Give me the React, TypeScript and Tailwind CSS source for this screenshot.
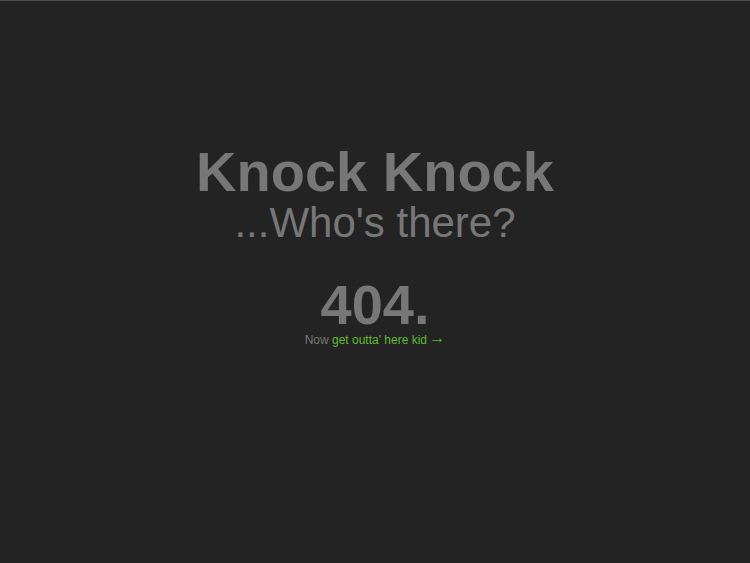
export default function App() {
  return (
    <div className="min-h-[563px] w-full bg-[#232323] border-t border-[#4a4a4a] font-['Liberation_Sans',Arial,sans-serif] text-[#777777] flex flex-col items-center">
      <h1 className="mt-[143px] text-[56px] leading-[56px] font-bold">Knock Knock</h1>
      <h2 className="mt-[2px] text-[42px] leading-[42px]">...Who&apos;s there?</h2>
      <p className="mt-[38px] text-[56px] leading-[46px] font-bold">404.</p>
      <p className="mt-[5px] text-[12px] leading-[14px]">
        Now{' '}
        <a href="#" className="text-[#5cbd2c]">
          get outta&apos; here kid{' '}
          <span className="inline-block align-top -ml-[1px] text-[16px] leading-[10px]">&rarr;</span>
        </a>
      </p>
    </div>
  );
}
